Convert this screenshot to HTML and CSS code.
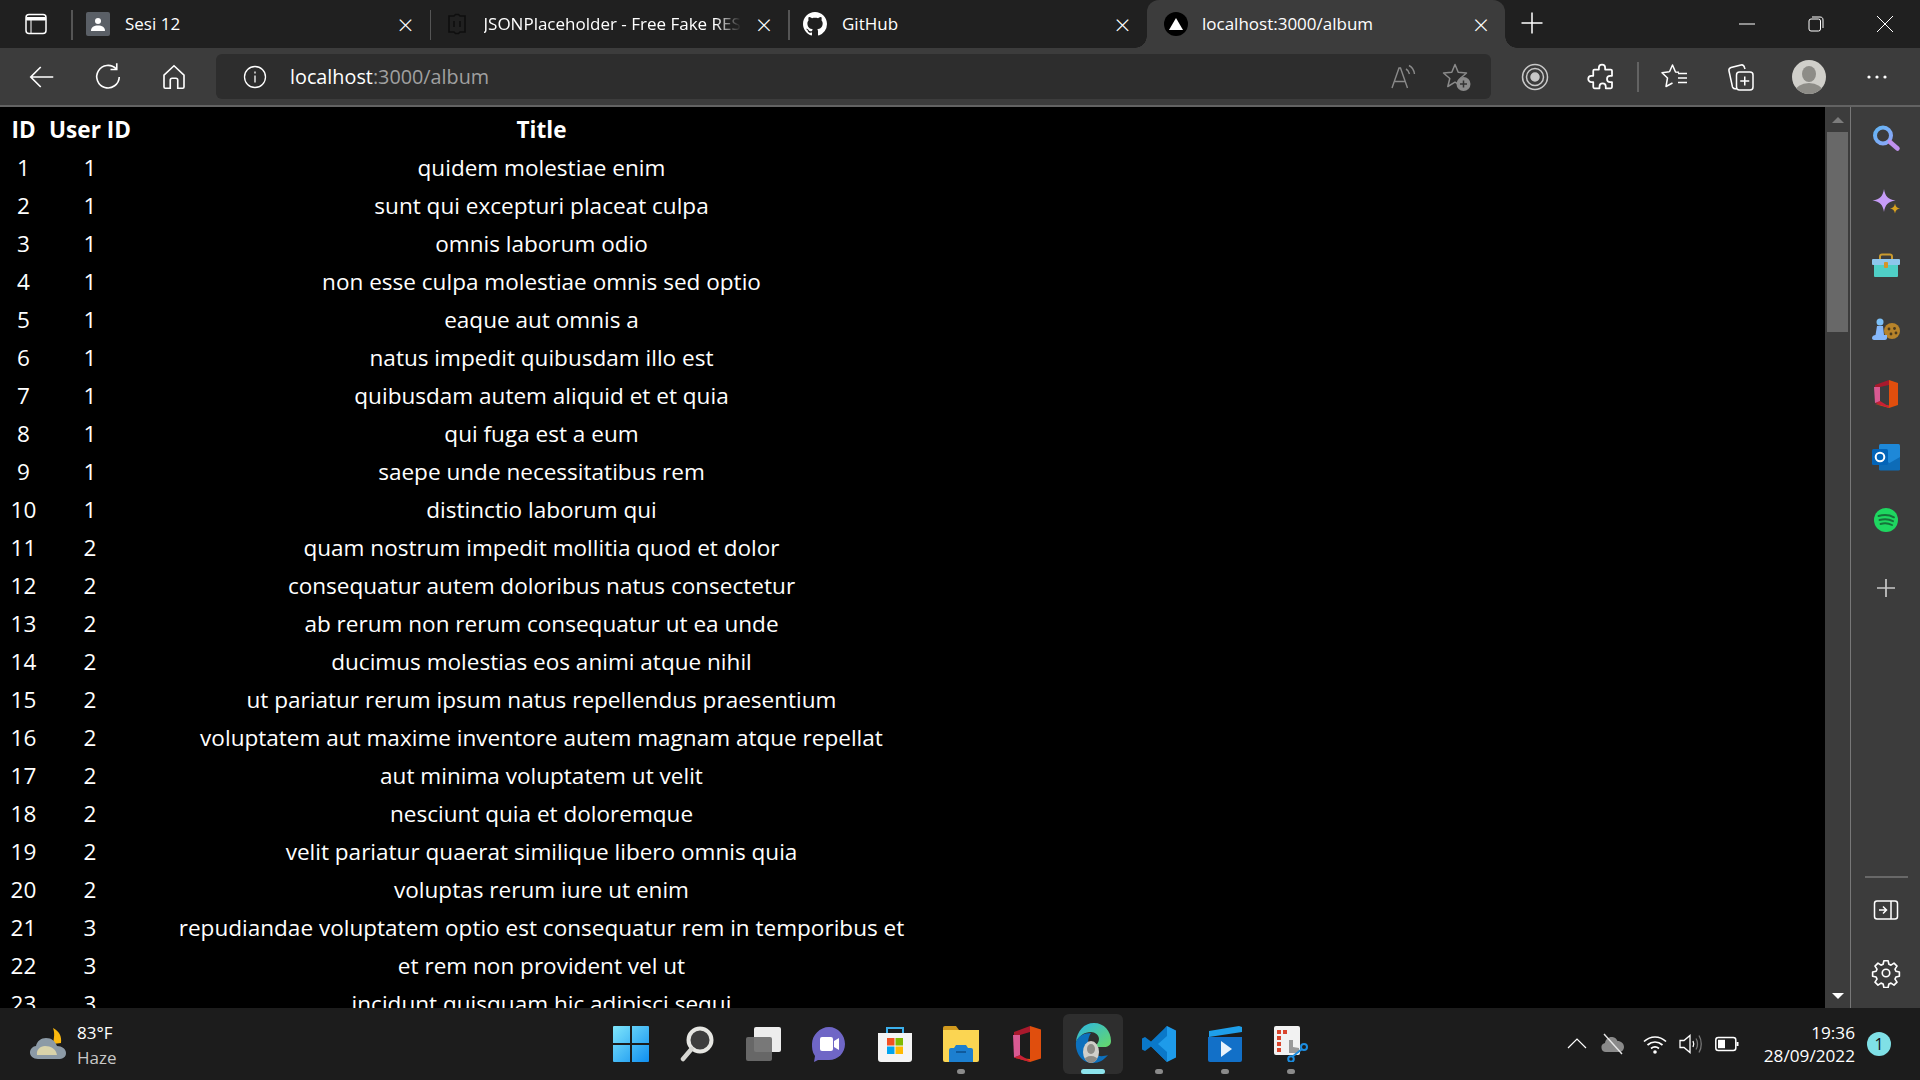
FILE: index.html
```html
<!DOCTYPE html>
<html lang="en">
<head>
    <meta charset="UTF-8">
    <title>localhost:3000/album</title>
    <link rel="stylesheet" href="styles.css">
</head>
<body>
<div class="tabbar">
    <div class="tab-menu">
        <svg class="ic24" viewBox="0 0 24 24" fill="none" stroke="#fff" stroke-width="1.5"><rect x="2" y="2.5" width="20" height="19" rx="3"/><path d="M2.5 5.5h19V8h-19zM7 8v13" fill="#fff" stroke-width="1"/></svg>
    </div>
    <div class="tab">
        <svg class="ic24" viewBox="0 0 24 24"><rect width="24" height="24" rx="2" fill="#5a5f66"/><circle cx="12" cy="9" r="3" fill="#fff"/><path d="M5 19c0-4 3-5.500 7-5.500s7 1.500 7 5.500z" fill="#fff"/></svg>
        <span class="tab-title">Sesi 12</span>
        <span class="tab-close">&times;</span>
    </div>
    <div class="tab">
        <svg class="ic24" viewBox="0 0 24 24" fill="none" stroke="#0e0e0e" stroke-width="1.6"><path d="M4 4h5l1.500-1.500h3L15 4h5v16h-5l-1.500 1.500h-3L9 20H4z"/><path d="M9 9v6M15 9v6"/></svg>
        <span class="tab-title tab-title-fade">JSONPlaceholder - Free Fake RES</span>
        <span class="tab-close">&times;</span>
    </div>
    <div class="tab tab-last">
        <svg class="ic24" viewBox="0 0 16 16" fill="#fff"><path d="M8 0C3.58 0 0 3.580 0 8c0 3.540 2.290 6.530 5.470 7.590.4.07.55-.17.55-.38 0-.19-.01-.82-.01-1.490-2.010.37-2.530-.49-2.690-.94-.09-.23-.48-.94-.82-1.130-.28-.15-.68-.52-.01-.53.63-.01 1.080.58 1.230.82.72 1.210 1.870.87 2.330.66.07-.52.28-.87.51-1.070-1.780-.2-3.640-.89-3.640-3.950 0-.87.31-1.590.82-2.150-.08-.2-.36-1.020.08-2.120 0 0 .67-.21 2.200.82.64-.18 1.320-.27 2-.27s1.360.09 2 .27c1.530-1.040 2.200-.82 2.200-.82.44 1.100.16 1.920.08 2.120.51.56.82 1.270.82 2.150 0 3.070-1.870 3.750-3.650 3.950.29.25.54.73.54 1.480 0 1.070-.01 1.930-.01 2.200 0 .21.15.46.55.38A8.013 8.013 0 0016 8c0-4.420-3.580-8-8-8z"/></svg>
        <span class="tab-title">GitHub</span>
        <span class="tab-close">&times;</span>
    </div>
    <div class="tab tab-active">
        <svg class="ic24" viewBox="0 0 24 24"><circle cx="12" cy="12" r="12" fill="#000"/><path d="M12 6l7 12H5z" fill="#fff"/></svg>
        <span class="tab-title">localhost:3000/album</span>
        <span class="tab-close">&times;</span>
    </div>
    <div class="tab-new">
        <svg class="ic24" viewBox="0 0 24 24" stroke="#fff" stroke-width="1.500"><path d="M12 1.500v21M1.500 12h21"/></svg>
    </div>
    <div class="win-controls">
        <svg class="win-btn" viewBox="0 0 16 16" stroke="#fff" stroke-width="1"><path d="M0 8h16"/></svg>
        <svg class="win-btn" viewBox="0 0 16 16" fill="none" stroke="#fff" stroke-width="1"><rect x="1" y="3" width="11.500" height="12" rx="2"/><path d="M4 1h8c2 0 3 1 3 3v8"/></svg>
        <svg class="win-btn" viewBox="0 0 16 16" stroke="#fff" stroke-width="1"><path d="M0 0l16 16M16 0L0 16"/></svg>
    </div>
</div>

<div class="toolbar">
    <div class="tool-btn">
        <svg class="ic30" viewBox="0 0 24 24" fill="none" stroke="#fff" stroke-width="1.300"><path d="M21 12H3.500M11 4l-8 8 8 8"/></svg>
    </div>
    <div class="tool-btn">
        <svg class="ic30" viewBox="0 0 24 24" fill="none" stroke="#fff" stroke-width="1.300"><path d="M18.500 5.500A9 9 0 1 0 21 12"/><path d="M19 1v5h-5"/></svg>
    </div>
    <div class="tool-btn">
        <svg class="ic30" viewBox="0 0 24 24" fill="none" stroke="#fff" stroke-width="1.300"><path d="M4 10.500L12 3l8 7.500V20a1 1 0 0 1-1 1h-4v-6.500a1.500 1.500 0 0 0-1.500-1.500h-3A1.500 1.500 0 0 0 9 14.500V21H5a1 1 0 0 1-1-1z"/></svg>
    </div>
    <div class="omnibox">
        <svg class="omni-info" viewBox="0 0 24 24" fill="none" stroke="#fff" stroke-width="1.300"><circle cx="12" cy="12" r="10.500"/><path d="M12 10.500v7M12 6.500v2"/></svg>
        <span class="url">localhost<span class="url-dim">:3000/album</span></span>
        <svg class="ic30" viewBox="0 0 30 30" fill="none" stroke="#8a8a8a" stroke-width="1.400"><path d="M4 26L11 6h1.500l7 20M7 19.500h10"/><path d="M18 7c2 1 3 3 3.500 5M21 3.500c3 1.500 5 5 5.500 8.500"/></svg>
        <svg class="ic30 omni-fav" viewBox="0 0 30 30" fill="none" stroke="#8a8a8a" stroke-width="1.500" stroke-linejoin="round"><path d="M13 2.500l3.200 7.800 8.300.7-6.300 5.500 2 8-7.200-4.300L5.800 24.500l2-8L1.500 11l8.300-.7z"/><circle cx="21.500" cy="22" r="7" fill="#8a8a8a" stroke="none"/><path d="M21.500 18.500v7M18 22h7" stroke="#333"/></svg>
    </div>
    <div class="tool-right">
        <div class="tool-btn tool-btn-r">
            <svg class="ic30" viewBox="0 0 30 30" fill="none" stroke="#c8c8c8" stroke-width="1.500"><circle cx="15" cy="15" r="12.500"/><circle cx="15" cy="15" r="8.500"/><circle cx="15" cy="15" r="4" fill="#c8c8c8"/></svg>
        </div>
        <div class="tool-btn tool-btn-r">
            <svg class="ic30" viewBox="0 0 24 24" fill="none" stroke="#fff" stroke-width="1.400" stroke-linejoin="round"><path d="M9.500 4.500a2.500 2.500 0 0 1 5 0V6H19a1 1 0 0 1 1 1v4h-1.500a2.500 2.500 0 0 0 0 5H20v4a1 1 0 0 1-1 1h-4v-1.500a2.500 2.500 0 0 0-5 0V21H6a1 1 0 0 1-1-1v-4H3.500a2.500 2.500 0 0 1 0-5H5V7a1 1 0 0 1 1-1h3.500z"/></svg>
        </div>
        <span class="tool-sep"></span>
        <div class="tool-btn tool-btn-r">
            <svg class="ic30" viewBox="0 0 30 30" fill="none" stroke="#fff" stroke-width="1.500" stroke-linejoin="round"><path d="M9.500 9.800L12.500 3l3 7 3.500.3M9.500 9.800L2 10.700l5.500 5.300L6 24.500l6.500-3.500"/><path d="M18 11.500h9M18 16h9M18 20.500h9"/></svg>
        </div>
        <div class="tool-btn tool-btn-r">
            <svg class="ic30" viewBox="0 0 30 30" fill="none" stroke="#fff" stroke-width="1.500"><rect x="9.500" y="10" width="16.500" height="18" rx="3"/><path d="M17.750 14.500v9M13.250 19h9"/><path d="M9.500 27c-2 0-3.500-.5-4-2L2 9c-.5-2 .5-3 2-3.500L14 3c2-.5 3 .5 3.500 2.500L18 7"/></svg>
        </div>
        <div class="tool-btn tool-btn-r">
            <svg class="avatar" viewBox="0 0 34 34"><defs><clipPath id="av"><circle cx="17" cy="17" r="17"/></clipPath></defs><g clip-path="url(#av)"><rect width="34" height="34" fill="#d0cfca"/><ellipse cx="17" cy="14" rx="7" ry="8" fill="#8d8c87"/><ellipse cx="17" cy="32" rx="14" ry="9" fill="#8d8c87"/></g></svg>
        </div>
        <div class="tool-btn tool-btn-r">
            <svg class="ic30" viewBox="0 0 30 30" fill="#fff"><circle cx="8" cy="15" r="1.600"/><circle cx="16" cy="15" r="1.600"/><circle cx="24" cy="15" r="1.600"/></svg>
        </div>
    </div>
</div>

<div class="main">
    <div class="page">
        <table class="album-table">
            <colgroup><col class="col-id"><col class="col-user"><col class="col-title"></colgroup>
            <thead>
                <tr><th>ID</th><th>User ID</th><th>Title</th></tr>
            </thead>
            <tbody>
                <tr><td>1</td><td>1</td><td>quidem molestiae enim</td></tr>
                <tr><td>2</td><td>1</td><td>sunt qui excepturi placeat culpa</td></tr>
                <tr><td>3</td><td>1</td><td>omnis laborum odio</td></tr>
                <tr><td>4</td><td>1</td><td>non esse culpa molestiae omnis sed optio</td></tr>
                <tr><td>5</td><td>1</td><td>eaque aut omnis a</td></tr>
                <tr><td>6</td><td>1</td><td>natus impedit quibusdam illo est</td></tr>
                <tr><td>7</td><td>1</td><td>quibusdam autem aliquid et et quia</td></tr>
                <tr><td>8</td><td>1</td><td>qui fuga est a eum</td></tr>
                <tr><td>9</td><td>1</td><td>saepe unde necessitatibus rem</td></tr>
                <tr><td>10</td><td>1</td><td>distinctio laborum qui</td></tr>
                <tr><td>11</td><td>2</td><td>quam nostrum impedit mollitia quod et dolor</td></tr>
                <tr><td>12</td><td>2</td><td>consequatur autem doloribus natus consectetur</td></tr>
                <tr><td>13</td><td>2</td><td>ab rerum non rerum consequatur ut ea unde</td></tr>
                <tr><td>14</td><td>2</td><td>ducimus molestias eos animi atque nihil</td></tr>
                <tr><td>15</td><td>2</td><td>ut pariatur rerum ipsum natus repellendus praesentium</td></tr>
                <tr><td>16</td><td>2</td><td>voluptatem aut maxime inventore autem magnam atque repellat</td></tr>
                <tr><td>17</td><td>2</td><td>aut minima voluptatem ut velit</td></tr>
                <tr><td>18</td><td>2</td><td>nesciunt quia et doloremque</td></tr>
                <tr><td>19</td><td>2</td><td>velit pariatur quaerat similique libero omnis quia</td></tr>
                <tr><td>20</td><td>2</td><td>voluptas rerum iure ut enim</td></tr>
                <tr><td>21</td><td>3</td><td>repudiandae voluptatem optio est consequatur rem in temporibus et</td></tr>
                <tr><td>22</td><td>3</td><td>et rem non provident vel ut</td></tr>
                <tr><td>23</td><td>3</td><td>incidunt quisquam hic adipisci sequi</td></tr>
            </tbody>
        </table>
    </div>
    <div class="scrollbar">
        <div class="scroll-cap"><span class="arrow-up"></span></div>
        <div class="scroll-thumb"></div>
        <div class="scroll-cap scroll-cap-end"><span class="arrow-down"></span></div>
    </div>
    <div class="sidebar">
        <div class="side-slot side-slot-lg">
            <svg class="ic30" viewBox="0 0 30 30" fill="none"><defs><linearGradient id="sg" x1="0" y1="0" x2="1" y2="1"><stop offset="0" stop-color="#62b5f5"/><stop offset="1" stop-color="#8fa6f8"/></linearGradient></defs><circle cx="12" cy="11.500" r="8" stroke="url(#sg)" stroke-width="4"/><path d="M19 18l7.500 6.500" stroke="#c191ee" stroke-width="4.500" stroke-linecap="round"/></svg>
        </div>
        <div class="side-slot side-slot-lg">
            <svg class="ic30" viewBox="0 0 30 30"><path d="M13 1c1 7 4 10.500 11.500 11.500C17 13.500 14 17 13 24c-1-7-4-10.500-11.500-11.500C9 11.500 12 8 13 1z" fill="#c69cf8"/><path d="M24 15.500c.5 3 2 4.500 5 5-3 .5-4.500 2-5 5-.5-3-2-4.500-5-5 3-.5 4.500-2 5-5z" fill="#d9a21e"/></svg>
        </div>
        <div class="side-slot side-slot-lg">
            <svg class="ic30" viewBox="0 0 30 30"><path d="M9 7V4.500C9 3 10 2.500 11 2.500h8c1 0 2 .5 2 2V7" fill="none" stroke="#c99a2e" stroke-width="2"/><rect x="1" y="7" width="28" height="6" rx="1" fill="#8ec6ec"/><path d="M3 13h24v11a1 1 0 0 1-1 1H4a1 1 0 0 1-1-1z" fill="#4fcfc6"/><rect x="13" y="10" width="4" height="6" rx="1" fill="#d5952a"/></svg>
        </div>
        <div class="side-slot">
            <svg class="ic30" viewBox="0 0 30 30"><circle cx="21" cy="15" r="8" fill="#b7832a"/><g fill="#4b3a1d"><circle cx="18" cy="13" r="1.400"/><circle cx="23.500" cy="12.500" r="1.400"/><circle cx="25" cy="17" r="1.400"/><circle cx="20" cy="18" r="1.400"/></g><circle cx="9" cy="6" r="3.500" fill="#7cc0f8"/><path d="M6 10h6l1 9h3v3c0 1-1 2-2 2H3c-1 0-2-1-2-2 0-2 2-3 3.500-3z" fill="#86b8fb"/></svg>
        </div>
        <div class="side-slot">
            <svg class="ic30" viewBox="0 0 30 30"><path d="M18 1l9 3v22l-9 3-14-4 14 1.500z" fill="#e04e0d"/><path d="M18 1L4 6v18l5-2V8l9-2z" fill="#a9192c"/><path d="M4 24l5-2 9 5.500V29z" fill="#c91f35"/><path d="M3 8l6 0v14l-5 2z" fill="#d85a92"/></svg>
        </div>
        <div class="side-slot">
            <svg class="ic30" viewBox="0 0 30 30"><rect x="8" y="2" width="21" height="26" rx="1.500" fill="#1e88d8"/><path d="M8 15l10.500 6L29 15v12a1.500 1.500 0 0 1-1.500 1.500h-18A1.500 1.500 0 0 1 8 27z" fill="#0d6cb8"/><rect x="1" y="7" width="16" height="16" rx="1.500" fill="#0364b8"/><circle cx="9" cy="15" r="4.300" fill="none" stroke="#fff" stroke-width="2"/></svg>
        </div>
        <div class="side-slot">
            <svg class="ic30" viewBox="0 0 30 30" fill="none"><circle cx="15" cy="15" r="12" fill="#1ed760"/><path d="M7.500 11c5-1.500 11-1.200 15.500 1.300M8.500 15c4.500-1.200 9.500-1 13.500 1.200M9.500 19c3.500-1 8-.8 11.500 1" stroke="#16713a" stroke-width="1.900" stroke-linecap="round"/></svg>
        </div>
        <div class="side-slot side-plus">
            <svg class="ic24" viewBox="0 0 24 24" stroke="#c8c8c8" stroke-width="1.700"><path d="M12 3v18M3 12h18"/></svg>
        </div>
        <div class="side-bottom">
            <div class="side-rule"></div>
            <div class="side-slot">
                <svg class="ic30" viewBox="0 0 30 30" fill="none" stroke="#fff" stroke-width="1.500"><rect x="3.500" y="6" width="23" height="18" rx="2.500"/><path d="M20 6v18M8 15h7M12 11.500l3.500 3.500-3.500 3.500"/></svg>
            </div>
            <div class="side-slot">
                <svg class="ic30" viewBox="0 0 24 24" fill="none" stroke="#fff" stroke-width="1.300" stroke-linejoin="round"><circle cx="12" cy="12" r="3"/><path d="M10.300 2.200h3.400l.6 2.800 1.700.7 2.400-1.600 2.400 2.400-1.600 2.400.7 1.700 2.800.6v3.400l-2.800.6-.7 1.700 1.600 2.400-2.400 2.400-2.400-1.600-1.700.7-.6 2.800h-3.400l-.6-2.800-1.700-.7-2.400 1.600-2.400-2.400 1.600-2.400-.7-1.700-2.800-.6v-3.400l2.800-.6.7-1.700L3.200 6.500l2.400-2.400L8 5.700l1.700-.7z"/></svg>
            </div>
        </div>
    </div>
</div>

<div class="taskbar">
    <div class="weather">
        <svg class="weather-ic" viewBox="0 0 36 32"><path d="M23 0c6 3 9 8 8 15l-8 1c1-6 2-11 0-16z" fill="#fbb80e"/><path d="M8 31C3 31 0 28 0 24.500S3 18 6 18c1-5 5-8 10-8 6 0 9 3 11 8 5 0 9 3 9 7s-3 6-8 6z" fill="#8c9aa6"/><path d="M7 27c-1-5 3-9 8-9 6 0 11 3 12 9z" fill="#d9d3aa"/></svg>
        <div class="weather-text">
            <span>83°F</span>
            <span class="weather-sub">Haze</span>
        </div>
    </div>
    <div class="task-icons">
        <div class="task-btn">
            <svg class="ic36" viewBox="0 0 36 36"><defs><linearGradient id="wg" x1="0" y1="0" x2="1" y2="1"><stop offset="0" stop-color="#7fe6fb"/><stop offset="1" stop-color="#0f8ff0"/></linearGradient></defs><path d="M0 1a1 1 0 0 1 1-1h16v17H0zM19 0h16a1 1 0 0 1 1 1v16H19zM0 19h17v17H1a1 1 0 0 1-1-1zM19 19h17v16a1 1 0 0 1-1 1H19z" fill="url(#wg)"/></svg>
        </div>
        <div class="task-btn">
            <svg class="ic36" viewBox="0 0 36 36"><circle cx="21" cy="14" r="11.500" fill="#3d3d3d" stroke="#e6e6e2" stroke-width="4"/><path d="M12.500 23L4 33" stroke="#d6d6d2" stroke-width="4.500" stroke-linecap="round"/></svg>
        </div>
        <div class="task-btn">
            <svg class="ic36" viewBox="0 0 36 36"><rect x="9" y="1" width="27" height="25" rx="2" fill="#ededed"/><rect x="1" y="11" width="26" height="24" rx="2" fill="#6e6e6e" opacity=".92"/></svg>
        </div>
        <div class="task-btn">
            <svg class="ic36" viewBox="0 0 36 36"><path d="M18 1c9 0 16 8 16 17s-7 16-16 16H7l-4 2 1-6C1 26 1 22 1 18 1 9 9 1 18 1z" fill="#6f66c6"/><rect x="9" y="11" width="13" height="14" rx="2" fill="#fff"/><path d="M23 15l5-3v12l-5-3z" fill="#fff"/></svg>
        </div>
        <div class="task-btn">
            <svg class="ic36" viewBox="0 0 36 36"><path d="M10 7V2h16v5" fill="none" stroke="#3bb0ec" stroke-width="2"/><path d="M1 7h34v26a3 3 0 0 1-3 3H4a3 3 0 0 1-3-3z" fill="#f4f4f4"/><rect x="10" y="12" width="7.500" height="7.500" fill="#f25022"/><rect x="18.500" y="12" width="7.500" height="7.500" fill="#7fba00"/><rect x="10" y="20.500" width="7.500" height="7.500" fill="#00a4ef"/><rect x="18.500" y="20.500" width="7.500" height="7.500" fill="#ffb900"/></svg>
        </div>
        <div class="task-btn task-dot">
            <svg class="ic36" viewBox="0 0 36 36"><path d="M0 2a2 2 0 0 1 2-2h11l3 4H0z" fill="#d19a1e"/><path d="M0 4h36v30a2 2 0 0 1-2 2H2a2 2 0 0 1-2-2z" fill="#fbd552"/><path d="M6 24a2 2 0 0 1 2-2h3l2-3h10l2 3h3a2 2 0 0 1 2 2v12H6z" fill="#1c7fd0"/><rect x="13" y="25" width="10" height="2" fill="#0f5a9c"/></svg>
        </div>
        <div class="task-btn">
            <svg class="ic36" viewBox="0 0 36 36"><path d="M21 0l11 3.500v29L21 36 5 31.500 21 33z" fill="#e04e0d"/><path d="M21 0L5 6v25.500l6-2.500V9l10-3z" fill="#a9192c"/><path d="M5 31.500l6-2.500 10 6v1z" fill="#c91f35"/><path d="M4 9h7v20l-6 2.500z" fill="#d85a92"/></svg>
        </div>
        <div class="task-btn task-active">
            <svg class="ic36 edge-ic" viewBox="0 0 36 42"><defs><linearGradient id="eg" x1="0" y1="0" x2="1" y2="1"><stop offset="0" stop-color="#2bb6e6"/><stop offset="1" stop-color="#67d866"/></linearGradient><clipPath id="eav"><ellipse cx="16" cy="29" rx="8" ry="11"/></clipPath></defs><path d="M1 19C2 8 9 0 19 0c10 0 17 8 17 18 0 4-3 6-7 6h-9c2-3 4-5 4-8 0-4-4-7-8-7C9 9 4 13 1 19z" fill="url(#eg)"/><path d="M1 19c-1 10 5 21 17 21 6 0 11-3 15-8-3 1-8 2-12 0-5-2-8-6-8-12 0-4 1-7 3-10C9 10 3 13 1 19z" fill="#0c70bd"/><g clip-path="url(#eav)"><rect x="8" y="18" width="16" height="22" fill="#d0cfca"/><ellipse cx="16" cy="26" rx="4" ry="5" fill="#8d8c87"/><ellipse cx="16" cy="38" rx="7" ry="5" fill="#8d8c87"/></g></svg>
        </div>
        <div class="task-btn task-dot">
            <svg class="ic36" viewBox="0 0 36 36"><path d="M26 0l9 4.500v27L26 36 10 20z" fill="#1e9bea"/><path d="M26 0L10 15.500 4 11 1 12.500v11L4 25l6-4.500L26 36V26l-9-8 9-8z" fill="#0a78c9"/></svg>
        </div>
        <div class="task-btn task-dot">
            <svg class="ic36" viewBox="0 0 36 36"><path d="M2 5l30-5 3 1v5L2 11z" fill="#1e9fea"/><path d="M1 11h34v23a2 2 0 0 1-2 2H3a2 2 0 0 1-2-2z" fill="#1270c8"/><path d="M14 15l11 8-11 8z" fill="#e8f2fb"/></svg>
        </div>
        <div class="task-btn task-dot">
            <svg class="ic36" viewBox="0 0 36 36"><rect x="1" y="0" width="26" height="29" rx="2" fill="#f2f2f2"/><g fill="#d9442c"><rect x="4" y="4" width="4" height="4"/><rect x="10" y="4" width="4" height="4"/><rect x="4" y="10" width="4" height="4"/><rect x="4" y="16" width="4" height="4"/><rect x="4" y="22" width="4" height="4"/></g><path d="M16 14v13l10 0V22l-6-1v-7z" fill="#9a9a9a"/><circle cx="31" cy="21" r="3" fill="none" stroke="#1c8de0" stroke-width="2"/><circle cx="18" cy="33" r="2.800" fill="none" stroke="#1c8de0" stroke-width="2"/><path d="M29 23l-10 8" stroke="#1c8de0" stroke-width="2"/></svg>
        </div>
    </div>
    <div class="tray">
        <div class="tray-slot">
            <svg class="ic20" viewBox="0 0 20 20" fill="none" stroke="#fff" stroke-width="1.200"><path d="M1 14l9-9 9 9"/></svg>
        </div>
        <div class="tray-slot">
            <svg class="ic24" viewBox="0 0 24 24"><path d="M5 20a4.500 4.500 0 0 1-1-8.900C4.500 7 8 4.500 11.500 5c2.500.3 4 2 5 4 3.500 0 6.500 2.500 6.500 6 0 3-2.500 5-5 5z" fill="#8a8a8a"/><path d="M3 2l18 20" stroke="#e8e8e8" stroke-width="1.400"/></svg>
        </div>
        <div class="tray-slot tray-wifi">
            <svg class="ic24" viewBox="0 0 24 24" fill="none" stroke="#fff" stroke-width="1.700"><path d="M1 9.500c6.500-6 15.500-6 22 0M4.500 13c4.500-4 10.500-4 15 0M8 16.500c2.500-2 5.500-2 8 0"/><circle cx="12" cy="20" r="1.800" fill="#fff" stroke="none"/></svg>
        </div>
        <div class="tray-slot">
            <svg class="ic24" viewBox="0 0 24 24" fill="none" stroke="#fff" stroke-width="1.300"><path d="M1 8.500h4L11 3.500v17l-6-5H1z"/><path d="M14 9c1 2 1 4 0 6"/><path d="M17 6.500c2 3 2 8 0 11M20 3.500c3 5 3 12 0 17" stroke="#777"/></svg>
        </div>
        <div class="tray-slot">
            <svg class="ic24" viewBox="0 0 24 24" fill="none" stroke="#fff" stroke-width="1.500"><rect x="0.800" y="5.500" width="20" height="13" rx="2.500"/><rect x="3" y="7.800" width="7" height="8.400" fill="#fff" stroke="none"/><path d="M22.500 10v4" stroke-width="2"/></svg>
        </div>
        <div class="clock">
            <span>19:36</span>
            <span>28/09/2022</span>
        </div>
        <div class="notif">1</div>
    </div>
</div>
</body>
</html>
```

FILE: styles.css
```css
html, body {
    margin: 0;
    padding: 0;
    height: 100%;
    overflow: hidden;
}

body {
    display: flex;
    flex-direction: column;
    height: 100vh;
    background: #000;
    color: #fff;
    font-family: "Open Sans", "Noto Sans", sans-serif;
}

svg {
    display: block;
    flex: none;
}

.ic20 { width: 20px; height: 20px; }
.ic24 { width: 24px; height: 24px; }
.ic30 { width: 30px; height: 30px; }
.ic36 { width: 36px; height: 36px; }

/* tab strip */
.tabbar {
    display: flex;
    align-items: stretch;
    height: 48px;
    flex: none;
    background: #202020;
}

.tab-menu {
    width: 71px;
    display: flex;
    align-items: center;
    justify-content: center;
}

.tab {
    position: relative;
    width: 358.5px;
    box-sizing: border-box;
    display: flex;
    align-items: center;
    padding: 0 12px 0 15px;
}

.tab::before {
    content: "";
    position: absolute;
    left: 0;
    top: 10px;
    bottom: 8px;
    width: 1.5px;
    background: #555;
}

.tab-active {
    background: #3c3c3c;
    border-radius: 12px 12px 0 0;
    padding-left: 17px;
}

.tab-active::before {
    display: none;
}

.tab-active::after {
    content: "";
    position: absolute;
    right: -12px;
    bottom: 0;
    width: 12px;
    height: 12px;
    background: radial-gradient(circle at 100% 0, #202020 11.5px, #3c3c3c 12px);
}

.tab-last::after {
    content: "";
    position: absolute;
    right: 0;
    bottom: 0;
    width: 12px;
    height: 12px;
    background: radial-gradient(circle at 0 0, #202020 11.5px, #3c3c3c 12px);
}

.tab-title {
    flex: 1;
    margin: 0 0 2px 15px;
    font-size: 17px;
    white-space: nowrap;
    overflow: hidden;
}

.tab-active .tab-title {
    margin-left: 14.5px;
}

.tab-title-fade {
    flex: none;
    -webkit-mask-image: linear-gradient(to right, #000 90%, transparent 100%);
    mask-image: linear-gradient(to right, #000 90%, transparent 100%);
}

.tab-close {
    width: 24px;
    margin-left: auto;
    text-align: center;
    font-size: 28px;
    font-weight: 300;
    line-height: 24px;
}

.tab-new {
    width: 54px;
    padding-bottom: 2px;
    display: flex;
    align-items: center;
    justify-content: center;
}

.win-controls {
    display: flex;
    align-items: center;
    margin-left: auto;
    padding: 0 27px 1px 0;
    gap: 53px;
}

.win-btn {
    width: 16px;
    height: 16px;
}

/* address bar row */
.toolbar {
    display: flex;
    align-items: center;
    flex: none;
    box-sizing: content-box;
    height: 57px;
    padding: 0 11px 0 9px;
    background: #3c3c3c;
    border-bottom: 2px solid #636363;
}

.tool-btn {
    width: 66px;
    display: flex;
    justify-content: center;
    align-items: center;
}

.tool-btn-r {
    width: 67px;
}

.omnibox {
    flex: 1;
    height: 45px;
    margin: 0 10px 0 9px;
    padding: 0 19px 0 27px;
    display: flex;
    align-items: center;
    background: #2d2d2d;
    border-radius: 6px;
}

.omni-info {
    width: 24px;
    height: 24px;
}

.url {
    flex: 1;
    margin-left: 23px;
    font-size: 19.8px;
}

.url-dim {
    color: #a0a0a0;
}

.omni-fav {
    margin-left: 24px;
}

.tool-right {
    display: flex;
    align-items: center;
}

.tool-sep {
    width: 2px;
    height: 30px;
    margin: 0 2px;
    background: #636363;
}

.avatar {
    width: 34px;
    height: 34px;
}

/* page area */
.main {
    flex: 1;
    display: flex;
    min-height: 0;
}

.page {
    flex: 1;
    overflow: hidden;
    background: #000;
}

.album-table {
    width: 938px;
    margin: 2px 0 0 6px;
    table-layout: fixed;
    border-collapse: separate;
    border-spacing: 3px;
    font-size: 22.55px;
}

.col-id { width: 29px; }
.col-user { width: 98px; }

.album-table th,
.album-table td {
    height: 35px;
    padding: 0;
    text-align: center;
    white-space: nowrap;
    line-height: 35px;
}

.album-table th {
    font-weight: 700;
}

.scrollbar {
    width: 25px;
    flex: none;
    display: flex;
    flex-direction: column;
    background: #3c3c3c;
}

.scroll-cap {
    height: 25px;
    display: flex;
    align-items: center;
    justify-content: center;
    flex: none;
}

.scroll-cap-end {
    margin-top: auto;
}

.arrow-up {
    border-left: 6px solid transparent;
    border-right: 6px solid transparent;
    border-bottom: 6px solid #7c7c7c;
}

.arrow-down {
    border-left: 6px solid transparent;
    border-right: 6px solid transparent;
    border-top: 6px solid #fff;
}

.scroll-thumb {
    width: 21px;
    height: 200px;
    margin-left: 2px;
    background: #686868;
}

.sidebar {
    width: 70px;
    flex: none;
    display: flex;
    flex-direction: column;
    box-sizing: border-box;
    border-left: 1px solid #777;
    background: #3c3c3c;
}

.side-slot {
    height: 63px;
    flex: none;
    display: flex;
    align-items: center;
    justify-content: center;
}

.side-slot-lg {
    height: 64px;
}

.side-plus {
    margin-top: 5px;
}

.side-bottom {
    margin-top: auto;
    padding-bottom: 3.5px;
}

.side-rule {
    height: 1.500px;
    margin: 0 12px 1px 14px;
    background: #686868;
}

/* windows taskbar */
.taskbar {
    flex: none;
    height: 72px;
    display: flex;
    align-items: center;
    box-sizing: border-box;
    padding: 0 29px 0 30px;
    background: #1c1c1c;
}

.weather {
    width: 568px;
    flex: none;
    display: flex;
    align-items: center;
    gap: 11px;
}

.weather-ic {
    width: 36px;
    height: 32px;
}

.weather-text {
    display: flex;
    flex-direction: column;
    padding-top: 2px;
    font-size: 17px;
    line-height: 25px;
}

.weather-sub {
    color: #c8c8c8;
}

.task-icons {
    display: flex;
}

.task-btn {
    position: relative;
    width: 60px;
    height: 60px;
    margin: 0 3px;
    border-radius: 6px;
    display: flex;
    align-items: center;
    justify-content: center;
}

.task-dot::after {
    content: "";
    position: absolute;
    left: 26px;
    bottom: 0;
    width: 8px;
    height: 5px;
    border-radius: 3px;
    background: #8a8a8a;
}

.task-active {
    background: #2e2e2e;
}

.task-active::after {
    content: "";
    position: absolute;
    left: 18px;
    bottom: 0;
    width: 24px;
    height: 5px;
    border-radius: 3px;
    background: #8de4ec;
}

.edge-ic {
    height: 42px;
}

.tray {
    margin-left: auto;
    display: flex;
    align-items: center;
}

.tray-slot {
    width: 36px;
    display: flex;
    justify-content: center;
}

.tray-wifi {
    margin-left: 6px;
}

.clock {
    width: 110px;
    margin-right: 12px;
    display: flex;
    flex-direction: column;
    align-items: flex-end;
    font-size: 17.2px;
    line-height: 23px;
    white-space: nowrap;
}

.notif {
    width: 24px;
    height: 24px;
    border-radius: 50%;
    background: #7fe0e6;
    color: #111;
    font-size: 16px;
    line-height: 24px;
    text-align: center;
}
```
